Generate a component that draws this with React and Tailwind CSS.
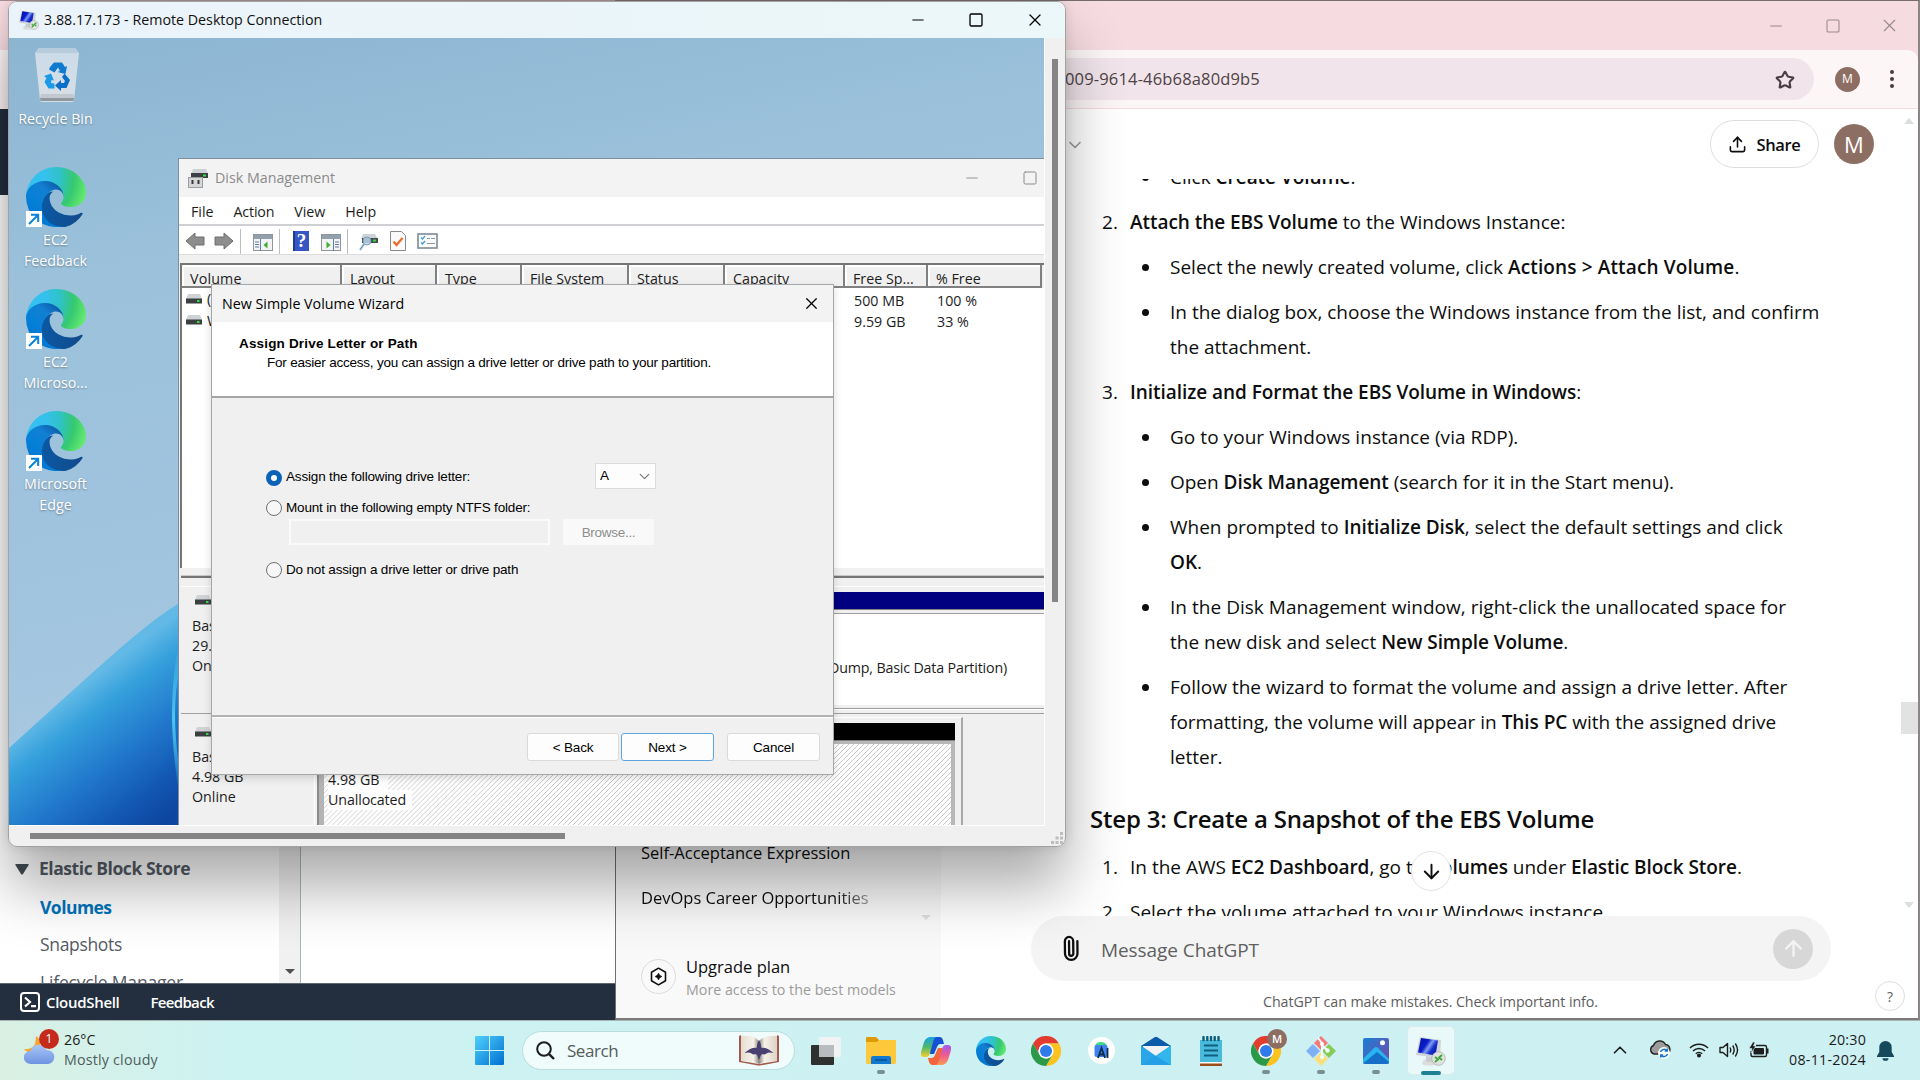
import {
  ChevronDown,
  ChevronUp,
  Minus,
  Square,
  X,
  Star,
  ArrowDown,
  ArrowUp,
  Paperclip,
  Upload,
} from "lucide-react";

/* ---------- shared drawings ---------- */

function EdgeLogo({ className }) {
  return (
    <svg viewBox="0 0 256 256" className={className}>
      <defs>
        <linearGradient id="edgeA" x1="63" y1="178" x2="241" y2="178" gradientUnits="userSpaceOnUse">
          <stop offset="0" stopColor="#0c59a4" />
          <stop offset="1" stopColor="#114a8b" />
        </linearGradient>
        <linearGradient id="edgeB" x1="157" y1="100" x2="46" y2="221" gradientUnits="userSpaceOnUse">
          <stop offset="0" stopColor="#0f5fae" />
          <stop offset="0.3" stopColor="#1280d2" />
          <stop offset="0.67" stopColor="#0680d7" />
          <stop offset="1" stopColor="#0078d4" />
        </linearGradient>
        <radialGradient id="edgeC" cx="26" cy="45" r="240" gradientUnits="userSpaceOnUse">
          <stop offset="0" stopColor="#35c1f1" />
          <stop offset="0.25" stopColor="#34c1ed" />
          <stop offset="0.5" stopColor="#2fc2c8" />
          <stop offset="0.75" stopColor="#36c970" />
          <stop offset="1" stopColor="#66eb6e" />
        </radialGradient>
      </defs>
      <path
        fill="url(#edgeA)"
        d="M235.68 195.46a93.73 93.73 0 0 1-10.54 4.71 101.87 101.87 0 0 1-35.9 6.46c-47.32 0-88.54-32.55-88.54-74.32a31.48 31.48 0 0 1 16.43-27.31c-42.8 1.8-53.8 46.4-53.8 72.53 0 73.88 68.09 81.37 82.76 81.37 7.91 0 19.84-2.3 27-4.56l1.31-.44a128.34 128.34 0 0 0 66.6-52.8 4 4 0 0 0-5.32-5.64z"
      />
      <path
        fill="url(#edgeB)"
        d="M105.73 241.42A79.2 79.2 0 0 1 83 220.08a80.72 80.72 0 0 1 29.49-120.36c3.12-1.47 8.45-4.13 15.54-4a32.35 32.35 0 0 1 25.69 13 31.88 31.88 0 0 1 6.36 18.66c0-.21 24.46-79.6-80-79.6-43.9 0-80 41.66-80 78.21a130.15 130.15 0 0 0 12.11 56 128 128 0 0 0 156.38 67.11 75.55 75.55 0 0 1-62.78-8z"
      />
      <path
        fill="url(#edgeC)"
        d="M152.33 148.86c-.81 1.05-3.3 2.5-3.3 5.66 0 2.61 1.7 5.12 4.72 7.23 14.38 10 41.49 8.68 41.56 8.68a59.56 59.56 0 0 0 30.27-8.35 61.38 61.38 0 0 0 30.43-52.88c.26-22.41-8-37.31-11.34-43.91C223.46 23.91 177.72 0 128 0A128 128 0 0 0 0 126.2c.48-36.54 36.8-66.05 80-66.05 3.5 0 23.46.34 42 10.07 16.34 8.58 24.9 18.94 30.85 29.21 6.18 10.67 7.28 24.15 7.28 29.52s-2.74 13.33-7.8 19.91z"
      />
    </svg>
  );
}

function ChromeLogo({ className }) {
  return (
    <svg viewBox="0 0 48 48" className={className}>
      <path fill="#e33b2e" d="M24 12H44.8A24 24 0 0 0 3.2 12L13.6 30A12 12 0 0 1 24 12z" />
      <path fill="#fcc31e" d="M34.39 30L24 48A24 24 0 0 0 44.8 12H24A12 12 0 0 1 34.39 30z" />
      <path fill="#2a9a48" d="M13.6 30L3.2 12A24 24 0 0 0 24 48L34.39 30A12 12 0 0 1 13.6 30z" />
      <circle cx="24" cy="24" r="12" fill="#fff" />
      <circle cx="24" cy="24" r="9.6" fill="#2f7bea" />
    </svg>
  );
}

function RdpIcon({ className }) {
  return (
    <svg viewBox="0 0 30 30" className={className}>
      <defs>
        <linearGradient id="rdpScreen" x1="0" y1="0" x2="1" y2="0.6">
          <stop offset="0" stopColor="#0512a0" />
          <stop offset="0.45" stopColor="#0a1ccc" />
          <stop offset="0.62" stopColor="#7f9af2" />
          <stop offset="0.8" stopColor="#1530cc" />
          <stop offset="1" stopColor="#0a1cb8" />
        </linearGradient>
      </defs>
      <path d="M7 25c2-3 10-3 13 0l1 3c-4 2-12 2-15 0z" fill="#dcdcdc" />
      <path d="M10 20l6 1 1 5h-7z" fill="#c9ccd0" />
      <path d="M4 1l21 3-1 18-24-3z" fill="#cfd3d9" />
      <path d="M5 2l17 2.500-2.500 15-17.500-3z" fill="url(#rdpScreen)" />
      <circle cx="22.500" cy="22.500" r="6.800" fill="#dfe3e0" stroke="#a6aaa6" strokeWidth="0.7" />
      <path d="M19 21l3 2.500-3 2.500M26 19l-3 2.500 3 2.500" fill="none" stroke="#3fa535" strokeWidth="1.800" />
    </svg>
  );
}

function DriveIcon({ className }) {
  return (
    <svg viewBox="0 0 16 10" className={className}>
      <path d="M2 0h12l2 5H0z" fill="#cfd3d6" />
      <rect x="0" y="4.500" width="16" height="5" fill="#3b3f42" />
      <rect x="11" y="6" width="2.500" height="2" fill="#2fe23a" />
    </svg>
  );
}

/* ---------- AWS console window ---------- */

function AwsWindow() {
  return (
    <div className="absolute left-0 top-0 flex h-[1020px] w-[616px] flex-col overflow-hidden border-r border-[#6d7073] bg-white font-['Open_Sans',sans-serif]">
      <div className="h-[50px] shrink-0 border-t border-[#a88f93] bg-[#f6dbe0]" />
      <div className="h-[59px] shrink-0 bg-[#fdf6f7]" />
      <div className="h-[86px] shrink-0 bg-[#232f3e]" />
      <div className="flex min-h-0 flex-1 items-end">
        <div className="flex h-[136px] w-[279px] flex-col overflow-hidden text-[17.5px] leading-[37px] text-[#545b64]">
          <div className="mt-[2px] flex items-center pl-[15px] font-bold leading-[39px]">
            <svg viewBox="0 0 14 11" className="mt-px h-[11px] w-[14px]">
              <path d="M1 0h12q1 0 .6 1L8 10q-1 1.200-2 0L.4 1Q0 0 1 0z" fill="#444b54" />
            </svg>
            <span className="ml-[10px] whitespace-nowrap tracking-[-0.450px]">Elastic Block Store</span>
          </div>
          <div className="pl-[40px] pt-px font-bold tracking-[-0.540px] text-[#0073bb]">
            <span>Volumes</span>
          </div>
          <div className="pl-[40px] tracking-[-0.330px]">Snapshots</div>
          <div className="whitespace-nowrap pl-[40px] pt-px tracking-[-0.180px]">Lifecycle Manager</div>
        </div>
        <div className="flex h-[136px] w-[21px] flex-col items-center justify-end bg-[#f1f1f1] pb-[9px]">
          <div className="h-0 w-0 border-x-[5px] border-t-[5px] border-x-transparent border-t-[#505050]" />
        </div>
        <div className="h-[136px] w-px bg-[#aab7b8]" />
      </div>
      <div className="flex h-[37px] shrink-0 items-center border-t border-[#5c6570] bg-[#232f3e] pb-px pl-[20px] text-[15px] font-semibold text-white">
        <svg viewBox="0 0 20 20" className="mt-px h-[20px] w-[20px]" fill="none" stroke="#fff" strokeWidth="2">
          <rect x="1" y="1" width="18" height="18" rx="3" />
          <path d="M5 5.500l5 4.500-5 4.500M11 14.200h5" strokeWidth="2.200" />
        </svg>
        <span className="ml-[6px] mt-px tracking-[-0.300px]">CloudShell</span>
        <span className="ml-[31px] mt-px tracking-[-0.670px]">Feedback</span>
      </div>
    </div>
  );
}

/* ---------- ChatGPT browser window ---------- */

function Numbered({ n, children }) {
  return (
    <div className="flex whitespace-nowrap">
      <span className="w-[28px] shrink-0">{n}.</span>
      <div>{children}</div>
    </div>
  );
}

function Bullet({ children }) {
  return (
    <div className="flex whitespace-nowrap pl-[40px]">
      <span className="mr-[21px] mt-[14px] h-[7px] w-[7px] shrink-0 rounded-full bg-[#0d0d0d]" />
      <div>{children}</div>
    </div>
  );
}

function B({ children }) {
  return <strong className="font-semibold tracking-[-0.050px]">{children}</strong>;
}

function ChatWindow() {
  return (
    <div className="absolute left-[616px] top-0 flex h-[1020px] w-[1304px] flex-col overflow-hidden border-b-2 border-r-2 border-t border-b-[#7b7b7b] border-r-[#8b8587] border-t-[#766b6d] bg-[#f6dbe0] font-['Open_Sans',sans-serif] text-[#0d0d0d]">
      <div className="flex h-[49px] shrink-0 items-center justify-end pr-[18px] text-[#978a8d]">
        <Minus className="mr-[40px] h-[18px] w-[18px]" strokeWidth={1.5} />
        <Square className="mr-[38px] h-[16px] w-[16px]" strokeWidth={1.6} />
        <X className="h-[21px] w-[21px]" strokeWidth={1.3} />
      </div>
      <div className="flex h-[58px] shrink-0 items-center rounded-tr-[10px] bg-[#fdf6f7]">
        <div className="flex h-[42px] w-[1198px] items-center justify-between rounded-r-full bg-[#f1e5eb] pl-[449px] pr-[19px]">
          <span className="pt-px text-[16.5px] tracking-[0.160px] text-[#4d4246]">009-9614-46b68a80d9b5</span>
          <Star className="mt-px h-[20px] w-[20px] text-[#4a3d41]" strokeWidth={2.5} />
        </div>
        <div className="ml-[21px] flex h-[25px] w-[25px] items-center justify-center rounded-full bg-[#8d6e63] text-[12px] text-white">
          M
        </div>
        <div className="ml-[30px] flex flex-col gap-[3px]">
          <i className="h-[4px] w-[4px] rounded-full bg-[#4a3d41]" />
          <i className="h-[4px] w-[4px] rounded-full bg-[#4a3d41]" />
          <i className="h-[4px] w-[4px] rounded-full bg-[#4a3d41]" />
        </div>
      </div>
      <div className="h-px shrink-0 bg-[#f6dbe0]" />
      <div className="flex min-h-0 flex-1 bg-white">
        {/* conversation list */}
        <div className="flex w-[325px] shrink-0 flex-col bg-[#f9f9f9] pl-[25px] pt-[721px] text-[16.5px]">
          <div className="whitespace-nowrap leading-[45px]">Self-Acceptance Expression</div>
          <div className="flex items-end justify-between whitespace-nowrap leading-[45px]">
            <span className="bg-gradient-to-r from-[#0d0d0d] from-85% to-[#a0a0a0] bg-clip-text text-transparent">
              DevOps Career Opportunities
            </span>
            <i className="mr-[10px] h-0 w-0 border-x-[5px] border-t-[5px] border-x-transparent border-t-[#dedede]" />
          </div>
          <div className="mt-[35px] flex items-center gap-[10px]">
            <div className="-mt-[3px] flex h-[35px] w-[35px] items-center justify-center rounded-full border border-[#dcdcdc]">
              <svg viewBox="0 0 24 24" className="h-[21px] w-[21px]" fill="none" stroke="#0d0d0d" strokeWidth="1.800">
                <path d="M12 2.500l8 4.600v9.800l-8 4.600-8-4.600V7.100z" strokeLinejoin="round" />
                <path d="M12 8.200q.7 3.100 3.800 3.800-3.100.7-3.800 3.800-.7-3.100-3.800-3.800 3.100-.7 3.800-3.800z" fill="#0d0d0d" strokeWidth="0.800" />
              </svg>
            </div>
            <div className="flex flex-col whitespace-nowrap pt-px">
              <span className="leading-[22px]">Upgrade plan</span>
              <span className="pt-px text-[14.25px] leading-[22px] text-[#9b9b9b]">More access to the best models</span>
            </div>
          </div>
        </div>
        {/* conversation */}
        <div className="flex min-w-0 flex-1 flex-col">
          <div className="flex h-[70px] shrink-0 items-center">
            <ChevronDown className="ml-[124px] mt-[2px] h-[20px] w-[20px] text-[#9b9b9b]" strokeWidth={2} />
            <div className="ml-auto flex h-[48px] w-[109px] items-center justify-center gap-[9px] rounded-full border border-[#dedede] text-[16.5px] font-semibold">
              <Upload className="h-[19px] w-[19px]" strokeWidth={2} />
              <span className="mt-[3px] tracking-[-0.350px]">Share</span>
            </div>
            <div className="ml-[15px] flex h-[40px] w-[40px] items-center justify-center rounded-full bg-[#8d6e63] text-[22px] text-white">
              M
            </div>
            <i className="mb-[46px] ml-[30px] mr-[4px] h-0 w-0 border-x-[5px] border-b-[6px] border-x-transparent border-b-[#dedede]" />
          </div>
          <div className="relative flex h-[737px] shrink-0 overflow-hidden">
            <div className="ml-[161px] flex flex-1 flex-col gap-[10px] text-[19px] leading-[35px] -mt-[19px]">
              <Bullet>
                Click <B>Create Volume</B>.
              </Bullet>
              <Numbered n={2}>
                <B>Attach the EBS Volume</B> to the Windows Instance:
              </Numbered>
              <Bullet>
                Select the newly created volume, click <strong className="font-semibold tracking-[0.130px]">Actions &gt; Attach Volume</strong>.
              </Bullet>
              <Bullet>
                In the dialog box, choose the Windows instance from the list, and confirm
                <br />
                the attachment.
              </Bullet>
              <Numbered n={3}>
                <B>Initialize and Format the EBS Volume in Windows</B>:
              </Numbered>
              <Bullet>
                <span className="tracking-[0.050px]">Go to your Windows instance (via RDP).</span>
              </Bullet>
              <Bullet>
                <span className="tracking-[-0.030px]">
                  Open <B>Disk Management</B> (search for it in the Start menu).
                </span>
              </Bullet>
              <Bullet>
                When prompted to <B>Initialize Disk</B>, select the default settings and click
                <br />
                <B>OK</B>.
              </Bullet>
              <Bullet>
                <span className="tracking-[0.030px]">In the Disk Management window, right-click the unallocated space for</span>
                <br />
                the new disk and select <B>New Simple Volume</B>.
              </Bullet>
              <Bullet>
                Follow the wizard to format the volume and assign a drive letter. After
                <br />
                formatting, the volume will appear in <B>This PC</B> with the assigned drive
                <br />
                letter.
              </Bullet>
              <h3 className="-ml-[12px] mb-[5px] mt-[18px] whitespace-nowrap text-[24px] font-semibold leading-[32px] tracking-[-0.210px]">
                Step 3: Create a Snapshot of the EBS Volume
              </h3>
              <Numbered n={1}>
                In the AWS <B>EC2 Dashboard</B>, go to <B>Volumes</B> under <B>Elastic Block Store</B>.
              </Numbered>
              <Numbered n={2}>Select the volume attached to your Windows instance.</Numbered>
            </div>
            <div className="absolute left-[470px] top-[672px] flex h-[40px] w-[40px] items-center justify-center rounded-full border border-[#e3e3e3] bg-white">
              <ArrowDown className="h-[23px] w-[23px]" strokeWidth={2} />
            </div>
            <div className="flex w-[18px] flex-col items-center">
              <div className="mt-[523px] h-[32px] w-[17px] bg-[#e2e2e2]" />
              <i className="mt-[168px] h-0 w-0 border-x-[5px] border-t-[6px] border-x-transparent border-t-[#dedede]" />
            </div>
          </div>
          <div className="ml-[90px] flex h-[65px] w-[800px] shrink-0 items-center rounded-full bg-[#f4f4f4] pl-[27px] pr-[18px]">
            <Paperclip className="h-[25px] w-[25px] -rotate-45 text-[#0d0d0d]" strokeWidth={2.2} />
            <span className="ml-[18px] mt-[4px] text-[19px] tracking-[-0.070px] text-[#5f5f5f]">Message ChatGPT</span>
            <div className="ml-auto flex h-[40px] w-[40px] items-center justify-center rounded-full bg-[#d7d7d7] text-[#f4f4f4]">
              <ArrowUp className="h-[25px] w-[25px]" strokeWidth={2.2} />
            </div>
          </div>
          <div className="flex flex-1 items-center">
            <span className="-mt-[6px] ml-[322px] w-[612px] whitespace-nowrap text-[14.25px] tracking-[-0.075px] text-[#5d5d5d]">
              ChatGPT can make mistakes. Check important info.
            </span>
            <div className="mb-[18px] flex h-[30px] w-[30px] shrink-0 items-center justify-center rounded-full border border-[#dedede] text-[14px] text-[#5d5d5d]">
              ?
            </div>
          </div>
        </div>
      </div>
    </div>
  );
}

/* ---------- remote desktop ---------- */

function Wallpaper() {
  return (
    <svg viewBox="0 0 1035 787" className="absolute inset-0 h-[787px] w-[1035px]">
      <defs>
        <linearGradient id="sky" x1="0" y1="0" x2="0.250" y2="1">
          <stop offset="0" stopColor="#8cb5d2" />
          <stop offset="0.300" stopColor="#9bc1db" />
          <stop offset="0.700" stopColor="#a1c4df" />
          <stop offset="1" stopColor="#aecbe2" />
        </linearGradient>
        <linearGradient id="bloom" x1="70" y1="650" x2="165" y2="775" gradientUnits="userSpaceOnUse">
          <stop offset="0" stopColor="#62b9e6" />
          <stop offset="0.180" stopColor="#35a0dc" />
          <stop offset="0.500" stopColor="#2178cc" />
          <stop offset="0.800" stopColor="#1257b2" />
          <stop offset="1" stopColor="#0d46a0" />
        </linearGradient>
        <linearGradient id="arc" x1="0" y1="0" x2="0" y2="1">
          <stop offset="0" stopColor="#4cc8f0" stopOpacity="0" />
          <stop offset="0.500" stopColor="#4cc8f0" />
          <stop offset="1" stopColor="#4cc8f0" stopOpacity="0" />
        </linearGradient>
      </defs>
      <rect width="1035" height="787" fill="url(#sky)" />
      <path d="M0 710Q55 660 100 620T172 564V787H0z" fill="url(#bloom)" />
      <path d="M171 600Q155 670 171 760L171 735Q161 670 171 630z" fill="url(#arc)" />
    </svg>
  );
}

function DesktopIcon({ lines, children, className }) {
  return (
    <div className={"flex w-[93px] flex-col items-center " + className}>
      {children}
      <div className="text-center text-[14.25px] leading-[20.500px] text-white [text-shadow:0_1px_2px_rgba(0,0,0,0.35)]">
        {lines.map((l) => (
          <div key={l}>{l}</div>
        ))}
      </div>
    </div>
  );
}

function EdgeShortcut() {
  return (
    <div className="relative mb-[3px] h-[60px] w-[60px]">
      <EdgeLogo className="h-[60px] w-[60px]" />
      <svg viewBox="0 0 16 16" className="absolute bottom-0 left-0 h-[16px] w-[16px]">
        <rect width="16" height="16" fill="#fff" />
        <path d="M3 13L11.500 4.500M5 3.800H12.200V11" fill="none" stroke="#0a84d8" strokeWidth="2" />
      </svg>
    </div>
  );
}

function RecycleBin() {
  return (
    <svg viewBox="0 0 44 55" className="-mt-px mb-[7px] ml-[2px] h-[55px] w-[44px]">
      <defs>
        <linearGradient id="bin" x1="0" y1="0" x2="0" y2="1">
          <stop offset="0" stopColor="#c9dbe8" />
          <stop offset="1" stopColor="#d9dfe5" />
        </linearGradient>
      </defs>
      <path d="M4 1h36l4 5-5 47q0 2-2 2H7q-2 0-2-2L0 6z" fill="url(#bin)" />
      <path d="M4 1h36l4 5H0z" fill="#b7cddd" />
      <path d="M5 51h34l-.500 3H5.500z" fill="#8f979e" />
      <path d="M6 47h32l1 4H5z" fill="#c2c8cd" />
      <path d="M15 20l4-4.500h8l3 4.500 2-1-1.500 8-8-2 2.500-1-2-3.500-3.500 5-5.500-3z" fill="#0f7ad2" />
      <path d="M9 29l7-2.500 3 7-2.500-.500-.5 3 3.500.5v5h-6L9.500 35l2-4z" fill="#1a9bea" />
      <path d="M29.500 26.500L35 33l-3.500 8H26v3l-6-5.500 6-5.500v3h3l1-2-3-4z" fill="#0a6fc6" />
    </svg>
  );
}

function HeaderCell({ w, children }) {
  return (
    <div className={"flex h-[23px] shrink-0 items-center overflow-hidden border-b-2 border-r-2 border-[#808080] bg-[#f0f0f0] pl-[8px] pt-[6px] shadow-[inset_2px_2px_0_#fff] " + w}>
      {children}
    </div>
  );
}

function Toolbar() {
  return (
    <div className="flex h-[29px] items-center border-b border-[#dcdcdc] bg-white pl-[6px] pt-[2px]">
      <svg viewBox="0 0 20 18" className="h-[18px] w-[20px]">
        <path d="M1 9l9-8v4h9v8h-9v4z" fill="#8d8d8d" stroke="#6e6e6e" />
      </svg>
      <svg viewBox="0 0 20 18" className="ml-[9px] h-[18px] w-[20px]">
        <path d="M19 9l-9-8v4H1v8h9v4z" fill="#8d8d8d" stroke="#6e6e6e" />
      </svg>
      <div className="ml-[6px] h-[25px] w-px bg-[#bdbdbd]" />
      <svg viewBox="0 0 20 17" className="ml-[12px] mt-[2px] h-[17px] w-[20px]">
        <rect x="0.500" y="0.500" width="19" height="16" fill="#f4f4f4" stroke="#8d969d" />
        <rect x="1" y="1" width="18" height="4" fill="#93a0ac" />
        <path d="M7.500 5v12M2 8h4M2 10.500h4M2 13h4" stroke="#5c7fae" />
        <path d="M14.500 7.500v7l-4-3.500z" fill="#3eae2b" />
      </svg>
      <div className="ml-[6px] h-[25px] w-px bg-[#bdbdbd]" />
      <div className="ml-[13px] flex h-[20px] w-[16px] items-center justify-center bg-[#3656c4] pl-[1px] font-['Liberation_Serif',serif] text-[19px] font-bold text-white shadow-[inset_2px_0_0_#1e3a96]">
        ?
      </div>
      <svg viewBox="0 0 20 17" className="ml-[12px] mt-[2px] h-[17px] w-[20px]">
        <rect x="0.500" y="0.500" width="19" height="16" fill="#f4f4f4" stroke="#8d969d" />
        <rect x="1" y="1" width="18" height="4" fill="#93a0ac" />
        <path d="M12.500 5v12M14 8h4M14 10.500h4M14 13h4" stroke="#5c7fae" />
        <path d="M5.500 7.500v7l4-3.500z" fill="#3eae2b" />
      </svg>
      <div className="ml-[6px] h-[25px] w-px bg-[#bdbdbd]" />
      <svg viewBox="0 0 20 18" className="ml-[11px] mt-[2px] h-[18px] w-[20px]">
        <path d="M4 1h12l3 5H2z" fill="#cdd2d6" />
        <rect x="3" y="5" width="16" height="5" fill="#474c50" />
        <rect x="14" y="6.500" width="3" height="2" fill="#32e03c" />
        <circle cx="8" cy="8" r="4" fill="#b9d6ea" fillOpacity="0.850" stroke="#7d9cb5" />
        <path d="M5 11l-4 6" stroke="#7fa6c4" strokeWidth="2" />
      </svg>
      <svg viewBox="0 0 16 20" className="ml-[11px] h-[20px] w-[16px]">
        <path d="M.5.5h11l4 4v15H.500z" fill="#fafafa" stroke="#8a8a8a" />
        <path d="M3.500 10.500l3 3.500 6-7" fill="none" stroke="#ee6a28" strokeWidth="2.200" />
      </svg>
      <svg viewBox="0 0 21 16" className="ml-[11px] h-[16px] w-[21px]">
        <rect x="1" y="1" width="19" height="14" fill="#fbfbfb" stroke="#7f8b94" strokeWidth="1.600" />
        <path d="M4 4.500l1.500 1.500L8 3M4 9.500l1.500 1.500L8 8" fill="none" stroke="#3a9be0" strokeWidth="1.200" />
        <path d="M10 5.500h3M14 5.500h4M10 10.500h8" stroke="#8a97a1" />
      </svg>
    </div>
  );
}

function DiskManagement() {
  return (
    <div className="absolute left-[169px] top-[120px] flex h-[667px] w-[866px] flex-col border-l border-t border-[#7e8f9b] bg-[#f0f0f0] text-[14.25px] text-[#1c1c1c]">
      <div className="flex h-[38px] shrink-0 items-center bg-[#f3f3f3] pl-[9px] pr-[6px] text-[#8b8b8b]">
        <svg viewBox="0 0 20 20" className="h-[20px] w-[20px]">
          <path d="M5 1h13l2 5H3z" fill="#cfd2d4" />
          <rect x="3" y="5" width="17" height="5" fill="#3d4143" />
          <rect x="15" y="6.500" width="3" height="2" fill="#2fe23a" />
          <rect x="0.500" y="9.500" width="14" height="10" fill="#d4d6d8" stroke="#9b9ea1" />
          <path d="M4.500 12v4M10.500 12v4" stroke="#3a3a3a" strokeWidth="2" />
        </svg>
        <span className="ml-[7px]">Disk Management</span>
        <Minus className="ml-auto h-[18px] w-[18px]" strokeWidth={1.2} />
        <Square className="ml-[41px] h-[16px] w-[16px]" strokeWidth={1.5} />
      </div>
      <div className="flex h-[29px] shrink-0 items-center gap-[20px] border-b-2 border-[#cfd0d4] bg-white pl-[12px] pt-[3px] text-[#1c1c1c]">
        <span>File</span>
        <span className="tracking-[-0.200px]">Action</span>
        <span>View</span>
        <span>Help</span>
      </div>
      <Toolbar />
      {/* volume list */}
      <div className="ml-[1px] mt-[8px] flex h-[305px] shrink-0 flex-col border-l-2 border-t-2 border-[#757575] bg-white">
        <div className="flex bg-[#f0f0f0]">
          <HeaderCell w="w-[160px] pl-[7px] tracking-[0.180px]">Volume</HeaderCell>
          <HeaderCell w="w-[95px]">Layout</HeaderCell>
          <HeaderCell w="w-[85px]">Type</HeaderCell>
          <HeaderCell w="w-[107px]">File System</HeaderCell>
          <HeaderCell w="w-[96px]">Status</HeaderCell>
          <HeaderCell w="w-[120px]">Capacity</HeaderCell>
          <HeaderCell w="w-[83px]">Free Sp...</HeaderCell>
          <HeaderCell w="w-[114px]">% Free</HeaderCell>
        </div>
        {[
          ["(", "500 MB", "100 %"],
          ["W", "9.59 GB", "33 %"],
        ].map(([name, free, pct]) => (
          <div key={name} className="flex h-[21.500px] items-center">
            <DriveIcon className="ml-[4px] h-[10px] w-[16px]" />
            <span className="ml-[5px] w-[22px] whitespace-nowrap">{name}</span>
            <span className="ml-[625px] mt-[3px] w-[83px] whitespace-nowrap">{free}</span>
            <span className="mt-[3px]">{pct}</span>
          </div>
        ))}
      </div>
      {/* splitter */}
      <div className="ml-[2px] flex h-[24px] shrink-0 flex-col">
        <div className="mt-[7px] h-[3px] border-b-2 border-t border-b-[#757575] border-t-[#c8c8c8]" />
        <div className="mt-[8px] h-px bg-white" />
      </div>
      {/* disk 0 */}
      <div className="ml-[2px] flex h-[122px] shrink-0 border-b border-[#9f9f9f]">
        <div className="flex w-[133px] shrink-0 flex-col pl-[11px] leading-[20px]">
          <DriveIcon className="ml-[3px] mt-[3px] h-[10px] w-[16px]" />
          <span className="mt-[11px]">Basic</span>
          <span>29.98 GB</span>
          <span>Online</span>
        </div>
        <div className="flex flex-1 flex-col">
          <div className="h-[18px] border-b border-[#808080] bg-[#000080]" />
          <div className="mt-[3px] h-[2px] border-b border-white bg-[#9f9f9f]" />
          <div className="flex h-[90px] items-center justify-end bg-white pr-[37px] pt-[15px] tracking-[-0.170px]">
            <span>(Boot, Page File, Crash Dump, Basic Data Partition)</span>
          </div>
          <div className="mt-[3px] h-[2px] border-b border-white bg-[#9f9f9f]" />
        </div>
      </div>
      {/* disk 1 */}
      <div className="ml-[2px] flex min-h-0 flex-1 overflow-hidden">
        <div className="flex w-[134px] shrink-0 flex-col border-r border-white pl-[11px] leading-[20px]">
          <DriveIcon className="ml-[3px] mt-[13px] h-[10px] w-[16px]" />
          <span className="mt-[10px]">Basic</span>
          <span>4.98 GB</span>
          <span>Online</span>
        </div>
        <div className="ml-[2px] w-[7px] bg-[#b4b4b4] shadow-[inset_2px_0_0_#8c8c8c]" />
        <div className="mt-[3px] flex w-[639px] flex-col border-r-2 border-t border-r-[#a8a8a8] border-t-white pr-[6px]">
          <div className="mt-[5px] h-[18px] shrink-0 border-b border-[#808080] bg-black" />
          <div className="flex flex-1 flex-col items-start border-r-[4px] border-t-[3px] border-[#b8b8b8] bg-[repeating-linear-gradient(135deg,#fff_0px,#fff_2.600px,#c9c9c9_2.900px,#c9c9c9_3.300px,#fff_3.540px)] pl-[4px] pt-[26px] leading-[20px]">
            <span className="bg-white pr-[9px]">4.98 GB</span>
            <span className="bg-white pr-[6px] tracking-[-0.120px]">Unallocated</span>
          </div>
        </div>
      </div>
    </div>
  );
}

function Radio({ checked, children }) {
  return (
    <div className="flex items-center">
      <span
        className={
          checked
            ? "h-[16px] w-[16px] rounded-full border-[5px] border-[#0a63b8] bg-white"
            : "h-[16px] w-[16px] rounded-full border border-[#6f6f6f] bg-[#f7f7f7]"
        }
      />
      <span className="ml-[4px] whitespace-nowrap">{children}</span>
    </div>
  );
}

function Wizard() {
  return (
    <div className="absolute left-[202px] top-[246px] flex h-[491px] w-[623px] flex-col border border-[#a5a7a9] bg-[#f0f0f0] font-['Liberation_Sans',sans-serif] text-[13.5px] text-black shadow-[0_3px_8px_rgba(0,0,0,0.15)]">
      <div className="flex h-[37px] shrink-0 items-center justify-between bg-[#f3f3f3] pl-[10px] pr-[12px] text-black">
        <span className="font-['Open_Sans',sans-serif] text-[14.25px]">New Simple Volume Wizard</span>
        <X className="h-[19px] w-[19px]" strokeWidth={1.5} />
      </div>
      <div className="flex h-[76px] shrink-0 flex-col border-b-2 border-[#a5a5a5] bg-white pl-[27px] pt-[12px] leading-[19px]">
        <span className="font-bold tracking-[0.170px]">Assign Drive Letter or Path</span>
        <span className="pl-[28px] tracking-[-0.216px]">
          For easier access, you can assign a drive letter or drive path to your partition.
        </span>
      </div>
      <div className="flex flex-1 flex-col pl-[54px] pt-[65px] tracking-[-0.170px]">
        <div className="flex h-[26px] items-center">
          <div className="w-[329px] pt-[3px]">
            <Radio checked>Assign the following drive letter:</Radio>
          </div>
          <div className="flex h-[26px] w-[61px] items-center justify-between border border-[#dcdcdc] bg-[#fdfdfd] pl-[4px] pr-[2px]">
            <span>A</span>
            <ChevronDown className="h-[17px] w-[17px] text-[#777]" strokeWidth={1.7} />
          </div>
        </div>
        <div className="mt-[9px] flex h-[20px] items-center">
          <Radio>Mount in the following empty NTFS folder:</Radio>
        </div>
        <div className="mt-[1px] flex h-[26px] items-center pl-[23px]">
          <div className="h-[26px] w-[261px] border-2 border-[#fafafa] bg-[#f0f0f0]" />
          <div className="ml-[13px] flex h-[26px] w-[91px] items-center justify-center bg-[#f9f9f9] pt-[2px] tracking-[-0.290px] text-[#8d8d8d]">
            Browse...
          </div>
        </div>
        <div className="mt-[15px] flex h-[20px] items-center">
          <Radio>Do not assign a drive letter or drive path</Radio>
        </div>
      </div>
      <div className="flex h-[59px] shrink-0 items-start border-t-2 border-[#b2b2b2] pl-[315px] pt-[16px] shadow-[inset_0_1px_0_#fff]">
        <div className="flex h-[28px] w-[92px] items-center justify-center rounded-[3px] border border-[#dadada] bg-[#fdfdfd] pt-[2px] tracking-[-0.160px]">
          &lt; Back
        </div>
        <div className="ml-[2px] flex h-[28px] w-[93px] items-center justify-center rounded-[3px] border border-[#5ea5e0] bg-[#fdfdfd] pt-[2px] tracking-[-0.160px]">
          Next &gt;
        </div>
        <div className="ml-[13px] flex h-[28px] w-[93px] items-center justify-center rounded-[3px] border border-[#dadada] bg-[#fdfdfd] pt-[2px] tracking-[-0.160px]">
          Cancel
        </div>
      </div>
    </div>
  );
}

function RdpWindow() {
  return (
    <div className="absolute left-[8px] top-px flex h-[846px] w-[1058px] flex-col overflow-hidden rounded-[9px] border border-[#a2a2a2] bg-[#f0f0f0] font-['Open_Sans',sans-serif]">
      <div className="flex h-[36px] shrink-0 items-center bg-gradient-to-r from-[#eaf3fa] to-[#ebf7f8] pl-[10px] pr-[20px] text-[14.25px] text-[#111]">
        <RdpIcon className="mb-px h-[20px] w-[20px]" />
        <span className="mb-px ml-[5px]">3.88.17.173 - Remote Desktop Connection</span>
        <Minus className="mb-px ml-auto h-[18px] w-[18px] text-black" strokeWidth={1.4} />
        <Square className="mb-px ml-[41px] h-[16px] w-[16px] text-black" strokeWidth={2} />
        <X className="mb-px ml-[41px] h-[20px] w-[20px] text-black" strokeWidth={1.5} />
      </div>
      <div className="flex min-h-0 flex-1">
        <div className="relative h-[788px] w-[1036px] shrink-0 overflow-hidden border-b border-r border-white">
          <Wallpaper />
          <div className="relative flex h-full w-[93px] flex-col pt-[10px]">
            <DesktopIcon lines={["Recycle Bin"]} className="h-[119px]">
              <RecycleBin />
            </DesktopIcon>
            <DesktopIcon lines={["EC2", "Feedback"]} className="h-[122px]">
              <EdgeShortcut />
            </DesktopIcon>
            <DesktopIcon lines={["EC2", "Microso..."]} className="h-[122px]">
              <EdgeShortcut />
            </DesktopIcon>
            <DesktopIcon lines={["Microsoft", "Edge"]} className="h-[122px]">
              <EdgeShortcut />
            </DesktopIcon>
          </div>
          <DiskManagement />
          <Wizard />
        </div>
        <div className="flex flex-1 pl-[7px] pt-[21px]">
          <div className="h-[543px] w-[6px] bg-[#858585]" />
        </div>
      </div>
      <div className="flex h-[20px] shrink-0 items-start">
        <div className="ml-[21px] mt-[7px] h-[6px] w-[535px] bg-[#858585]" />
        <svg viewBox="0 0 12 12" className="ml-auto mr-[2px] mt-[6px] h-[12px] w-[12px]" fill="#bdbdbd">
          <path d="M9 0h3v3H9zM9 4.500h3v3H9zM4.500 4.500h3v3h-3zM9 9h3v3H9zM4.500 9h3v3h-3zM0 9h3v3H0z" />
        </svg>
      </div>
    </div>
  );
}

/* ---------- taskbar ---------- */

function Tile({ children, running, active }) {
  return (
    <div className="flex h-full w-[55px] shrink-0 items-center justify-center">
      <div
        className={
          "relative flex h-[49px] w-[48px] items-center justify-center rounded-[5px] " +
          (active ? "border border-[#d8eaec] bg-[#e9f8f9]" : "")
        }
      >
        {children}
        {running && <i className="absolute bottom-px left-[20px] h-[4px] w-[8px] rounded-full bg-[#788f90]" />}
        {active && <i className="absolute -bottom-px left-[13px] h-[4px] w-[20px] rounded-full bg-[#1f7f93]" />}
      </div>
    </div>
  );
}

function WeatherIcon() {
  return (
    <svg viewBox="0 0 32 32" className="h-[32px] w-[32px]">
      <defs>
        <linearGradient id="cloud" x1="0" y1="0" x2="0" y2="1">
          <stop offset="0" stopColor="#a9c6f6" />
          <stop offset="1" stopColor="#6d93e2" />
        </linearGradient>
      </defs>
      <path d="M12 3q5 3 4 10t-12 6q-3-1-4-3 8 1 11-5 1-4 1-8z" fill="#f3a62a" />
      <path d="M7 31a7 6.500 0 0 1-.5-13 8.500 8.500 0 0 1 16-1A7 7 0 0 1 24 31z" fill="url(#cloud)" />
    </svg>
  );
}

function WindowsLogo() {
  return (
    <svg viewBox="0 0 29 29" className="h-[29px] w-[29px]">
      <defs>
        <linearGradient id="win" x1="0" y1="0" x2="1" y2="1">
          <stop offset="0" stopColor="#4fd0fb" />
          <stop offset="1" stopColor="#0070d2" />
        </linearGradient>
      </defs>
      <path fill="url(#win)" d="M1 0h13v14H0V1q0-1 1-1zM15 0h13q1 0 1 1v13H15zM0 15h14v14H1q-1 0-1-1zM15 15h14v13q0 1-1 1H15z" />
    </svg>
  );
}

function BookIcon() {
  return (
    <svg viewBox="0 0 40 31" className="h-[31px] w-[40px]">
      <defs>
        <linearGradient id="page" x1="0" y1="0" x2="1" y2="0">
          <stop offset="0" stopColor="#e6ddd0" />
          <stop offset="0.350" stopColor="#f6f2ea" />
          <stop offset="0.500" stopColor="#8f857b" />
          <stop offset="0.650" stopColor="#f6f2ea" />
          <stop offset="1" stopColor="#ddd3c6" />
        </linearGradient>
      </defs>
      <path d="M0 1l2-1v26l18 3 18-3V0l2 1v26l-19 3.500h-2L0 27z" fill="#a35a4c" />
      <path d="M2 1q13-1 18 5 5-6 18-5v25q-13 0-18 3-5-3-18-3z" fill="url(#page)" />
      <path d="M20 5l1.500 3 1 5q5-1 12 5-5-1-7 .5t-4 .5l-1.500 1-2 5-2-5-1.500-1q-2 1-4-.500t-7-.500q7-6 12-5l1-5z" fill="#474070" />
    </svg>
  );
}

function TaskViewIcon() {
  return (
    <svg viewBox="0 0 30 28" className="h-[28px] w-[30px]">
      <rect x="0" y="8" width="23" height="20" rx="1" fill="#2f3030" />
      <rect x="8" y="0" width="22" height="20" rx="1" fill="#f0f2f3" />
      <rect x="8" y="8" width="15" height="12" fill="#b9bcbe" />
    </svg>
  );
}

function FolderIcon() {
  return (
    <svg viewBox="0 0 30 27" className="h-[27px] w-[30px]">
      <path d="M0 1q0-1 1-1h9l3 3v4H0z" fill="#e09a06" />
      <path d="M0 5h11l2-2h16q1 0 1 1v21q0 2-1 2H1q-1 0-1-2z" fill="#fdc93a" />
      <path d="M5 27v-6q0-2 2-2h16q2 0 2 2v6z" fill="#0f7ad0" />
      <path d="M9 23h12" stroke="#0a4f93" strokeWidth="1.500" />
    </svg>
  );
}

function CopilotIcon() {
  return (
    <svg viewBox="0 0 30 28" className="h-[28px] w-[30px]">
      <defs>
        <linearGradient id="copA" x1="0" y1="0" x2="0" y2="1">
          <stop offset="0" stopColor="#1aa0e8" />
          <stop offset="0.500" stopColor="#4fb86a" />
          <stop offset="1" stopColor="#f6d02c" />
        </linearGradient>
        <linearGradient id="copB" x1="0" y1="0" x2="0" y2="1">
          <stop offset="0" stopColor="#a05af0" />
          <stop offset="0.500" stopColor="#ee5a92" />
          <stop offset="1" stopColor="#fb9a52" />
        </linearGradient>
      </defs>
      <path d="M11 0h8q2 0 3 3l1 4h-4q-2 0-3 3l-3 7H9L7 4q1-4 4-4z" fill="#1650d4" />
      <path d="M19 28h-8q-2 0-3-3l-1-4h4q2 0 3-3l3-7h4l2 13q-1 4-4 4z" fill="#f4643c" />
      <path d="M10 0h5q-2 1-3 5l-3 11q-1 4-4 4H3q-4 0-3-5l3-10q2-5 7-5z" fill="url(#copA)" />
      <path d="M20 28h-5q2-1 3-5l3-11q1-4 4-4h2q4 0 3 5l-3 10q-2 5-7 5z" fill="url(#copB)" />
    </svg>
  );
}

function AndroidStudioIcon() {
  return (
    <svg viewBox="0 0 27 27" className="h-[27px] w-[27px]">
      <circle cx="13.500" cy="13.500" r="13.500" fill="#fff" />
      <path d="M7 9q1-4 6-4t6 4z" fill="#3ddc84" />
      <rect x="6.500" y="8" width="13" height="12" rx="2" fill="#3f82f4" />
      <path d="M10 21l3.500-10 3.500 10M11 17.500h5M19.500 11v10" fill="none" stroke="#0c2f45" strokeWidth="1.800" />
    </svg>
  );
}

function MailIcon() {
  return (
    <svg viewBox="0 0 30 28" className="h-[28px] w-[30px]">
      <path d="M0 9l14-9h2l14 9v10H0z" fill="#0b5ba8" />
      <path d="M2 9h26v12H2z" fill="#f1f2f4" />
      <path d="M0 8.500l15 10.500 15-10.500V28H0z" fill="#2aa6e8" />
      <path d="M30 8.500V28L15 19z" fill="#3fc8f5" />
      <path d="M0 28L30 8.500V28z" fill="#1c93e0" fillOpacity="0.350" />
    </svg>
  );
}

function NotepadIcon() {
  return (
    <svg viewBox="0 0 22 30" className="h-[30px] w-[22px]">
      <path d="M0 4h22v24H0z" fill="#48bbdc" />
      <path d="M0 27h22v3H0z" fill="#9b4d1c" />
      <path d="M0 26h22v1.500H0z" fill="#fff" />
      <path d="M4 9.500h14M4 14.500h14M4 19.500h14" stroke="#0f5f80" strokeWidth="1.800" />
      <path d="M3.500 1v3M7.300 1v3M11 1v3M14.700 1v3M18.500 1v3" stroke="#0c5c7a" strokeWidth="2.400" strokeLinecap="round" />
    </svg>
  );
}

function GitIcon() {
  return (
    <svg viewBox="0 0 30 30" className="h-[30px] w-[30px]">
      <path d="M15 0l7 7-7 7-7-7z" fill="#f6797a" />
      <path d="M7 8l7 7-7 7-7-7z" fill="#7fb0f8" />
      <path d="M23 8l7 7-7 7-7-7z" fill="#84cc55" />
      <path d="M15 16l7 7-7 7-7-7z" fill="#fbe07c" />
      <path d="M12 2l4 5v14M16 9l5 5" fill="none" stroke="#f3fbfb" strokeWidth="2" />
      <circle cx="16" cy="8" r="2" fill="#f3fbfb" />
      <circle cx="16" cy="21" r="2.200" fill="#f3fbfb" />
      <circle cx="21.500" cy="14.500" r="2.200" fill="#f3fbfb" />
    </svg>
  );
}

function PhotosIcon() {
  return (
    <svg viewBox="0 0 26 26" className="h-[26px] w-[26px]">
      <defs>
        <linearGradient id="photo" x1="0" y1="0" x2="1" y2="0.700">
          <stop offset="0" stopColor="#1a7fd4" />
          <stop offset="1" stopColor="#6a51b0" />
        </linearGradient>
      </defs>
      <rect width="26" height="26" rx="2" fill="url(#photo)" />
      <path d="M0 21l11-11q2-2 4 0l11 11v3q0 2-2 2H2q-2 0-2-2z" fill="#28b4ee" />
      <path d="M14 14l12 10q0 2-2 2H2q-1 0-1.500-1z" fill="#1670c8" />
      <circle cx="19.500" cy="4.800" r="2.500" fill="#fff" />
    </svg>
  );
}

function Taskbar() {
  return (
    <div className="absolute bottom-0 left-0 flex h-[60px] w-[1920px] items-center border-t border-[#a9b5b5] bg-gradient-to-r from-[#d9f0e3] via-[#cdf2f2] via-12% to-[#cdf0f2] font-['Open_Sans',sans-serif] text-[14.25px] text-[#1b1b1b]">
      <div className="flex w-[462px] items-center pl-[24px]">
        <div className="relative mt-[-4px]">
          <WeatherIcon />
          <span className="absolute -top-[4px] left-[15px] flex h-[20px] w-[20px] items-center justify-center rounded-full bg-[#c42b1c] text-[12px] text-white">
            1
          </span>
        </div>
        <div className="-mt-[2px] ml-[8px] flex flex-col leading-[20px]">
          <span>26°C</span>
          <span className="tracking-[0.200px] text-[#4d5c5c]">Mostly cloudy</span>
        </div>
      </div>
      <Tile>
        <WindowsLogo />
      </Tile>
      <div className="ml-[5px] flex h-[39px] w-[273px] shrink-0 items-center rounded-full border border-[#b9dcdd] bg-[#f0fbfc] pl-[13px] pr-[15px]">
        <svg viewBox="0 0 19 19" className="h-[19px] w-[19px]" fill="none" stroke="#1d1d1d" strokeWidth="2">
          <circle cx="8" cy="8" r="6.800" />
          <path d="M12.800 12.800L18 18" strokeWidth="2.400" />
        </svg>
        <span className="ml-[12px] text-[17px] tracking-[-0.450px] text-[#545c5c]">Search</span>
        <div className="ml-auto">
          <BookIcon />
        </div>
      </div>
      <div className="w-[3.500px] shrink-0" />
      <Tile>
        <TaskViewIcon />
      </Tile>
      <Tile running>
        <FolderIcon />
      </Tile>
      <Tile>
        <CopilotIcon />
      </Tile>
      <Tile>
        <EdgeLogo className="h-[30px] w-[30px]" />
      </Tile>
      <Tile>
        <ChromeLogo className="h-[30px] w-[30px]" />
      </Tile>
      <Tile>
        <AndroidStudioIcon />
      </Tile>
      <Tile>
        <MailIcon />
      </Tile>
      <Tile>
        <NotepadIcon />
      </Tile>
      <Tile running>
        <ChromeLogo className="h-[30px] w-[30px]" />
        <span className="absolute left-[25px] top-[3px] flex h-[20px] w-[20px] items-center justify-center rounded-full bg-[#8d6e63] text-[11px] font-semibold text-white">
          M
        </span>
      </Tile>
      <Tile running>
        <GitIcon />
      </Tile>
      <Tile running>
        <PhotosIcon />
      </Tile>
      <Tile active>
        <RdpIcon className="h-[30px] w-[30px]" />
      </Tile>
      <div className="-mt-[2px] ml-auto flex items-center pr-[26px]">
        <ChevronUp className="h-[22px] w-[22px]" strokeWidth={1.8} />
        <svg viewBox="0 0 22 20" className="ml-[18px] h-[20px] w-[22px]">
          <path d="M5 14a4.500 4.500 0 0 1-.5-8.500 6.500 6.500 0 0 1 12-1A5 5 0 0 1 18 14z" fill="#9c9c9c" stroke="#222" strokeWidth="1.400" />
          <circle cx="15" cy="13" r="6" fill="#fff" />
          <path d="M11.500 12a3.700 3.700 0 0 1 6.500-1.200M18.500 14a3.700 3.700 0 0 1-6.500 1.200M18.300 8.500v2.600h-2.600M11.700 17.500v-2.600h2.600" fill="none" stroke="#1976d2" strokeWidth="1.500" />
        </svg>
        <svg viewBox="0 0 20 16" className="ml-[18px] h-[16px] w-[20px]" fill="none" stroke="#1d1d1d" strokeWidth="1.500">
          <path d="M1 6a12.700 12.700 0 0 1 18 0M4 9a8.500 8.500 0 0 1 12 0M6.800 11.700a4.600 4.600 0 0 1 6.400 0" />
          <circle cx="10" cy="13.500" r="1.300" fill="#1d1d1d" />
        </svg>
        <svg viewBox="0 0 20 16" className="ml-[10px] h-[16px] w-[20px]" fill="none" stroke="#1d1d1d" strokeWidth="1.400">
          <path d="M1 5.500h3L8.500 1.500v13L4 10.500H1z" strokeLinejoin="round" />
          <path d="M11 5.500q1.500 2.500 0 5M13.700 3.500q3 4.500 0 9M16.300 1.500q4.500 6.500 0 13" />
        </svg>
        <svg viewBox="0 0 20 16" className="ml-[10px] h-[16px] w-[20px]">
          <path d="M7 3.500h9q1.500 0 1.500 1.500v8q0 1.500-1.500 1.500H3.500Q2 14.500 2 13V9" fill="none" stroke="#1d1d1d" strokeWidth="1.400" />
          <rect x="4.500" y="6" width="10.500" height="6.500" rx="1" fill="#1d1d1d" />
          <path d="M18 6.500h1.500v5H18z" fill="#1d1d1d" />
          <path d="M4 0L0 6.500h3L2 11l5-7H4.500L6 0z" fill="#1d1d1d" stroke="#cdf0f2" strokeWidth="0.600" />
        </svg>
        <div className="ml-[20px] flex w-[77px] flex-col items-end leading-[20px]">
          <span className="tracking-[0.200px]">20:30</span>
          <span className="tracking-[0.260px]">08-11-2024</span>
        </div>
        <svg viewBox="0 0 17 20" className="ml-[11px] mt-[2px] h-[20px] w-[17px]" fill="#16495c">
          <path d="M8.500 0a6.200 6.200 0 0 1 6.200 6.200V11l2.300 4v1H0v-1l2.300-4V6.200A6.200 6.200 0 0 1 8.500 0zM5.500 17.200h6a3 2.600 0 0 1-6 0z" />
        </svg>
      </div>
    </div>
  );
}

export default function App() {
  return (
    <div className="relative h-[1080px] w-[1920px] overflow-hidden bg-white">
      <AwsWindow />
      <ChatWindow />
      {/* the shadow falls on the windows below, not on the taskbar */}
      <div className="absolute left-0 top-0 h-[1020px] w-[1920px] overflow-hidden">
        <div className="absolute left-[8px] top-px h-[846px] w-[1058px] rounded-[9px] shadow-[0_40px_60px_rgba(0,0,0,0.33),0_0_12px_rgba(0,0,0,0.12)]" />
        <RdpWindow />
      </div>
      <Taskbar />
    </div>
  );
}
